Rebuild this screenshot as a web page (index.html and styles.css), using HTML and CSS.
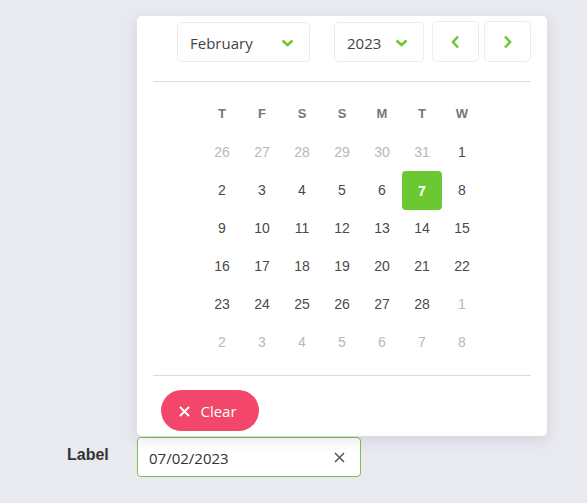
FILE: index.html
```html
<!DOCTYPE html>
<html lang="en">
<head>
<meta charset="utf-8">
<title>Date picker</title>
<link rel="stylesheet" href="styles.css">
</head>
<body>
<div class="page">
  <div class="field">
    <label class="label">Label</label>
    <div class="input-wrap">
      <div class="popup">
        <div class="header">
          <button class="select month">February
            <svg class="chev" width="13" height="8" viewBox="0 0 13 8"><path d="M1.5 1.5 L6.5 6 L11.5 1.5" fill="none" stroke="#6cc832" stroke-width="2.6"/></svg>
          </button>
          <button class="select year">2023
            <svg class="chev" width="13" height="8" viewBox="0 0 13 8"><path d="M1.5 1.5 L6.5 6 L11.5 1.5" fill="none" stroke="#6cc832" stroke-width="2.6"/></svg>
          </button>
          <button class="nav prev"><svg width="9" height="14" viewBox="0 0 9 14"><path d="M7 1.5 L2 7 L7 12.5" fill="none" stroke="#6cc832" stroke-width="2.6"/></svg></button>
          <button class="nav next"><svg width="9" height="14" viewBox="0 0 9 14"><path d="M2 1.5 L7 7 L2 12.5" fill="none" stroke="#6cc832" stroke-width="2.6"/></svg></button>
        </div>
        <hr class="rule rule-top">
        <div class="grid">
          <div class="dn">T</div><div class="dn">F</div><div class="dn">S</div><div class="dn">S</div><div class="dn">M</div><div class="dn">T</div><div class="dn">W</div>
          <div class="d muted">26</div><div class="d muted">27</div><div class="d muted">28</div><div class="d muted">29</div><div class="d muted">30</div><div class="d muted">31</div><div class="d">1</div>
          <div class="d">2</div><div class="d">3</div><div class="d">4</div><div class="d">5</div><div class="d">6</div><div class="d sel">7</div><div class="d">8</div>
          <div class="d">9</div><div class="d">10</div><div class="d">11</div><div class="d">12</div><div class="d">13</div><div class="d">14</div><div class="d">15</div>
          <div class="d">16</div><div class="d">17</div><div class="d">18</div><div class="d">19</div><div class="d">20</div><div class="d">21</div><div class="d">22</div>
          <div class="d">23</div><div class="d">24</div><div class="d">25</div><div class="d">26</div><div class="d">27</div><div class="d">28</div><div class="d muted">1</div>
          <div class="d muted">2</div><div class="d muted">3</div><div class="d muted">4</div><div class="d muted">5</div><div class="d muted">6</div><div class="d muted">7</div><div class="d muted">8</div>
        </div>
        <hr class="rule rule-bottom">
        <button class="clear">
          <svg width="11" height="11" viewBox="0 0 11 11"><path d="M1 1 L10 10 M10 1 L1 10" stroke="#fff" stroke-width="2"/></svg>
          <span>Clear</span>
        </button>
      </div>
      <div class="input">
        <span class="value">07/02/2023</span>
        <svg class="x" width="11" height="11" viewBox="0 0 11 11"><path d="M1 1 L10 10 M10 1 L1 10" stroke="#555" stroke-width="1.5"/></svg>
      </div>
    </div>
  </div>
</div>
</body>
</html>
```

FILE: styles.css
```css
html, body {
  margin: 0;
  padding: 0;
}
body {
  background: #e9eaf0;
  font-family: "Open Sans", "Noto Sans", sans-serif;
  color: #444;
}
.page {
  height: 503px;
  padding-top: 437px;
  box-sizing: border-box;
}
.field {
  display: flex;
  align-items: flex-start;
  padding-left: 67px;
}
.label {
  width: 70px;
  padding-top: 9px;
  font-family: "Liberation Sans", Arial, sans-serif;
  font-weight: bold;
  font-size: 16px;
  color: #333;
}
.input-wrap {
  position: relative;
}
.input {
  width: 224px;
  height: 40px;
  box-sizing: border-box;
  border: 1px solid #7cc04f;
  border-radius: 4px;
  background: #fff;
  display: flex;
  align-items: center;
  justify-content: space-between;
  padding: 1px 15px 0 11px;
}
.value {
  font-size: 15px;
  color: #333;
}
.popup {
  position: absolute;
  left: 0;
  bottom: calc(100% + 1px);
  width: 410px;
  height: 420px;
  box-sizing: border-box;
  background: #fff;
  border-radius: 5px;
  box-shadow: 0 4px 14px rgba(40, 45, 70, 0.12);
  padding: 5px 16px 5px;
  display: flex;
  flex-direction: column;
}
.header {
  display: flex;
  align-items: flex-end;
  justify-content: flex-end;
  height: 41px;
}
button {
  font-family: inherit;
  cursor: pointer;
}
.select {
  height: 40px;
  box-sizing: border-box;
  border: 1px solid #ececec;
  border-radius: 4px;
  background: #fff;
  display: flex;
  align-items: center;
  justify-content: space-between;
  font-size: 15px;
  color: #444;
  padding: 1px 15px 0 12px;
}
.month {
  width: 133px;
}
.year {
  width: 90px;
  margin-left: 24px;
  padding-right: 15px;
}
.chev {
  display: block;
}
.nav {
  width: 47px;
  height: 41px;
  box-sizing: border-box;
  border: 1px solid #ececec;
  border-radius: 5px;
  background: #fff;
  display: flex;
  align-items: center;
  justify-content: center;
  padding: 0;
}
.prev {
  margin-left: 8px;
}
.next {
  margin-left: 5px;
}
.rule {
  border: 0;
  height: 1px;
  background: #dcdcdc;
  margin: 0;
}
.rule-top {
  margin-top: 19px;
}
.grid {
  margin: 12px auto 0;
  display: grid;
  grid-template-columns: repeat(7, 40px);
  grid-template-rows: 39px;
  grid-auto-rows: 38px;
  font-family: "Liberation Sans", Arial, sans-serif;
}
.dn, .d {
  display: flex;
  align-items: center;
  justify-content: center;
}
.dn {
  font-size: 13px;
  font-weight: bold;
  color: #777;
}
.d {
  font-size: 14px;
  color: #4a4a4a;
}
.d.muted {
  color: #b8b8b8;
}
.d.sel {
  background: #6cc832;
  color: #fff;
  font-weight: bold;
  border-radius: 4px;
  height: 39px;
}
.rule-bottom {
  margin-top: 14px;
}
.clear {
  margin: 14px 0 0 8px;
  width: 98px;
  height: 41px;
  border: 0;
  border-radius: 21px;
  background: #f2476a;
  color: #fff;
  font-size: 15px;
  display: flex;
  align-items: center;
  justify-content: center;
  gap: 10px;
  padding: 1px 4px 0 0;
}
.clear svg {
  display: block;
}
.x {
  display: block;
}
```
